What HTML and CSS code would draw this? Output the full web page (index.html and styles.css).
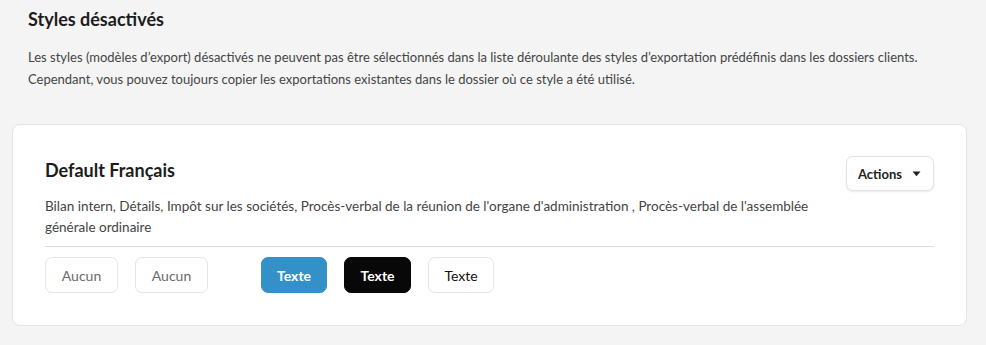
FILE: index.html
```html
<!DOCTYPE html>
<html lang="fr">
  <head>
    <meta charset="UTF-8" />
    <meta name="viewport" content="width=device-width, initial-scale=1.0" />
    <title>Styles désactivés</title>
    <link rel="stylesheet" href="styles.css">
  </head>

  <body>
    <div id="page">
      <section class="intro">
        <h2>Styles désactivés</h2>
        <p>
          Les styles (modèles d’export) désactivés ne peuvent pas être sélectionnés dans la liste déroulante des styles d’exportation prédéfinis dans les dossiers clients.<br />
          Cependant, vous pouvez toujours copier les exportations existantes dans le dossier où ce style a été utilisé.
        </p>
      </section>

      <div class="card">
        <div class="card-head">
          <div class="card-info">
            <h3>Default Français</h3>
            <p>Bilan intern, Détails, Impôt sur les sociétés, Procès-verbal de la réunion de l'organe d'administration , Procès-verbal de l'assemblée générale ordinaire</p>
          </div>
          <button class="actions-btn">
            Actions
            <svg width="9" height="6" viewBox="0 0 9 6"><path d="M0.5 0.5h8L4.5 5.2z" fill="#222" /></svg>
          </button>
        </div>
        <div class="btn-row">
          <div class="btn-group">
            <button class="preview-btn empty">Aucun</button>
            <button class="preview-btn empty">Aucun</button>
          </div>
          <div class="btn-group">
            <button class="preview-btn blue">Texte</button>
            <button class="preview-btn dark">Texte</button>
            <button class="preview-btn light">Texte</button>
          </div>
        </div>
      </div>
    </div>
  </body>
</html>
```

FILE: styles.css
```css
body {
  margin: 0;
  background-color: #f4f4f4;
  font-family: "Lato", "Open Sans", sans-serif;
  color: #1c1c1c;
}

#page {
  padding: 6px 19px 0 12px;
}

.intro {
  padding: 0 16px;
}

.intro h2 {
  font-size: 18px;
  font-weight: 700;
  margin: 0;
  line-height: 26px;
}

.intro p {
  margin: 14px 0 0;
  font-size: 13px;
  line-height: 22px;
  color: #444;
}

.card {
  margin-top: 34px;
  background-color: white;
  border: 1px solid #e4e4e4;
  border-radius: 8px;
  padding: 32px 32px 32px;
}

.card-head {
  display: flex;
  justify-content: space-between;
  align-items: flex-start;
  padding-bottom: 8px;
  border-bottom: 1px solid #dcdcdc;
}

.card-info h3 {
  font-size: 18px;
  font-weight: 700;
  margin: 0;
  line-height: 26px;
}

.card-info p {
  margin: 13px 0 0;
  font-size: 13.5px;
  line-height: 21px;
  color: #444;
  max-width: 790px;
}

.actions-btn {
  margin-top: -1px;
  height: 35px;
  padding: 0 12px 0 11px;
  display: flex;
  align-items: center;
  gap: 10px;
  background-color: white;
  border: 1px solid #e2e2e2;
  border-radius: 7px;
  box-shadow: 0 1px 2px rgba(0, 0, 0, 0.08);
  font-family: inherit;
  font-size: 13px;
  font-weight: 700;
  color: #222;
  cursor: pointer;
}

.btn-row {
  display: flex;
  gap: 53px;
  padding-top: 10px;
}

.btn-group {
  display: flex;
  gap: 17px;
}

.preview-btn {
  height: 36px;
  padding: 0 12px;
  border-radius: 7px;
  font-family: inherit;
  font-size: 14px;
  cursor: pointer;
}

.preview-btn.empty {
  width: 73px;
  background-color: white;
  border: 1px solid #e4e4e4;
  color: #6a6a6a;
}

.preview-btn.blue {
  width: 66px;
  background-color: #3490c8;
  border: 1px solid #3490c8;
  color: white;
  font-weight: 700;
}

.preview-btn.dark {
  width: 67px;
  background-color: #080808;
  border: 1px solid #080808;
  color: white;
  font-weight: 700;
}

.preview-btn.light {
  width: 66px;
  background-color: white;
  border: 1px solid #e4e4e4;
  color: #111;
}
```
